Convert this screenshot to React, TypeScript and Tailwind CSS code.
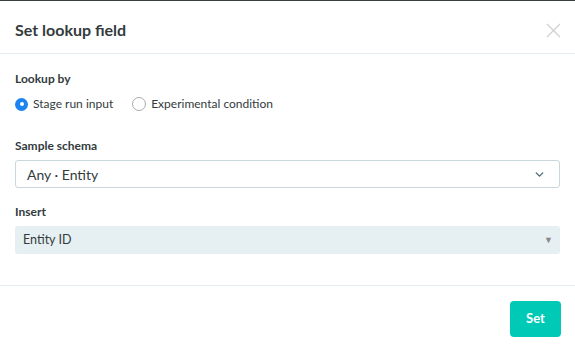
import { ChevronDown } from "lucide-react";

function Radio({ checked, label }: { checked?: boolean; label: string }) {
  return (
    <label className="flex items-center gap-[5px]">
      {checked ? (
        <span className="flex h-[13px] w-[13px] items-center justify-center rounded-full bg-[#1b84f2]">
          <span className="h-[4px] w-[4px] rounded-full bg-white" />
        </span>
      ) : (
        <span className="h-[14px] w-[14px] rounded-full border border-[#a9a9a9] bg-white" />
      )}
      <span>{label}</span>
    </label>
  );
}

export default function App() {
  return (
    <div
      className="flex h-[353px] w-[575px] flex-col border-t border-[#3a3f3f] bg-white text-[#333b3d]"
      style={{ fontFamily: "Lato, 'Liberation Sans', sans-serif" }}
    >
      <div className="flex h-[53px] items-start justify-between border-b border-[#e3ecee] px-[15px] pt-[19px]">
        <h2 className="text-[16px] font-bold leading-[20px]">Set lookup field</h2>
        <svg width="15" height="15" viewBox="0 0 15 15" className="mt-[3px] mr-[-1px]">
          <path d="M1 1L14 14M14 1L1 14" stroke="#d2d2d2" strokeWidth="1.4" />
        </svg>
      </div>

      <div className="flex flex-col px-[15px] pt-[17px] text-[12px]">
        <div className="font-bold leading-[16px]">Lookup by</div>
        <div className="mt-[7px] flex h-[20px] items-center gap-[19px] text-[12px]">
          <Radio checked label="Stage run input" />
          <Radio label="Experimental condition" />
        </div>

        <div className="mt-[24px] font-bold leading-[16px]">Sample schema</div>
        <div className="mt-[6px] flex h-[28px] items-center justify-between rounded-[3px] border border-[#c9d8dc] pl-[11px] pr-[13px] text-[14px]">
          <span>Any · Entity</span>
          <ChevronDown className="h-[13px] w-[13px] text-[#4f6b71]" strokeWidth={2.6} />
        </div>

        <div className="mt-[16px] font-bold leading-[16px]">Insert</div>
        <div className="mt-[6px] flex h-[28px] items-center justify-between rounded-[3px] bg-[#e6eff1] pl-[8px] pr-[7px] text-[12.5px]">
          <span>Entity ID</span>
          <span className="text-[9px] text-[#888]">▼</span>
        </div>
      </div>

      <div className="mt-[31px] flex justify-end border-t border-[#e3ecee] px-[14px] pt-[15px]">
        <button className="h-[36px] w-[51px] rounded-[4px] bg-[#00c9b6] text-[13px] font-bold text-white">
          Set
        </button>
      </div>
    </div>
  );
}
